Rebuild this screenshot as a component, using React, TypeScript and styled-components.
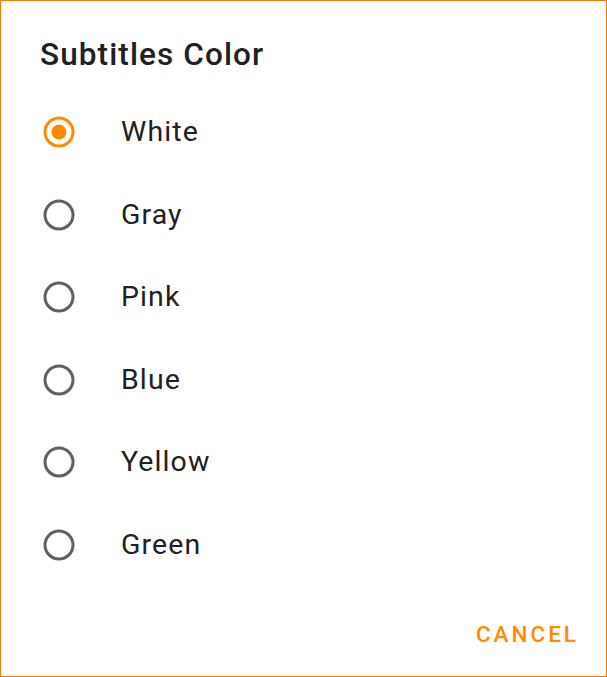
import React, { useState } from "react";
import styled, { createGlobalStyle } from "styled-components";

const GlobalStyle = createGlobalStyle`
  html, body { margin: 0; padding: 0; background: #ffffff; }
  body { font-family: Roboto, "Noto Sans", "Liberation Sans", sans-serif; }
  * { box-sizing: border-box; }
`;

const Dialog = styled.div`
  width: 607px;
  height: 677px;
  border: 1px solid #f57c00;
  background: #ffffff;
  display: flex;
  flex-direction: column;
`;

const Title = styled.h1`
  margin: 0;
  padding: 36px 0 0 39px;
  font-size: 31.5px;
  line-height: 36px;
  font-weight: 500;
  letter-spacing: 1.1px;
  color: #212121;
`;

const List = styled.div`
  margin-top: 18px;
  display: flex;
  flex-direction: column;
`;

const Row = styled.div`
  height: 82.5px;
  display: flex;
  align-items: center;
  padding-left: 42px;
  cursor: pointer;
`;

const Label = styled.span`
  margin-left: 46px;
  font-size: 28.5px;
  line-height: 32px;
  letter-spacing: 1.1px;
  color: #212121;
`;

const Footer = styled.div`
  display: flex;
  justify-content: flex-end;
  padding: 35px 30px 0 0;
`;

const Button = styled.button`
  border: none;
  background: transparent;
  padding: 0;
  font-family: inherit;
  font-size: 22.5px;
  line-height: 26px;
  font-weight: 500;
  letter-spacing: 3px;
  color: #ff8c00;
  margin-right: -3px;
`;

const Radio: React.FC<{ checked: boolean }> = ({ checked }) => (
  <svg width="32" height="32" viewBox="0 0 32 32">
    <circle
      cx="16"
      cy="16"
      r="14"
      fill="none"
      stroke={checked ? "#ff8c00" : "#616161"}
      strokeWidth="3"
    />
    {checked && <circle cx="16" cy="16" r="7.5" fill="#ff8c00" />}
  </svg>
);

const options = ["White", "Gray", "Pink", "Blue", "Yellow", "Green"];

export default function App() {
  const [selected, setSelected] = useState("White");
  return (
    <>
      <GlobalStyle />
      <Dialog>
        <Title>Subtitles Color</Title>
        <List>
          {options.map((o) => (
            <Row key={o} onClick={() => setSelected(o)}>
              <Radio checked={selected === o} />
              <Label>{o}</Label>
            </Row>
          ))}
        </List>
        <Footer>
          <Button>CANCEL</Button>
        </Footer>
      </Dialog>
    </>
  );
}
